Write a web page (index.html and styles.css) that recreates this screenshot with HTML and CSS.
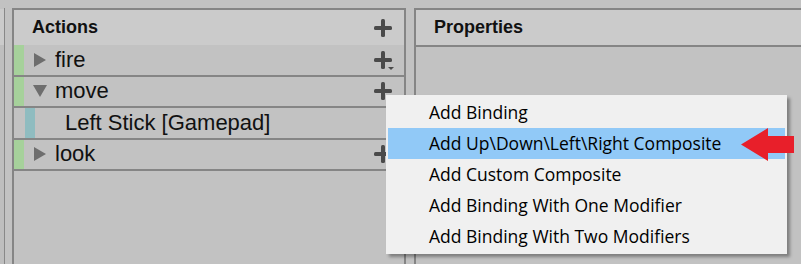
FILE: index.html
```html
<!DOCTYPE html>
<html>
<head>
<meta charset="utf-8">
<link rel="stylesheet" href="styles.css">
</head>
<body>
<div class="app">
  <div class="side"><div class="side-head"></div><div class="side-body"></div></div>
  <section class="panel actions">
    <header class="panel-head">
      <span>Actions</span>
      <svg class="plus" width="18" height="18" viewBox="0 0 18 18"><rect x="0" y="7" width="18" height="4" rx="1.5"/><rect x="7" y="0" width="4" height="18" rx="1.5"/></svg>
    </header>
    <div class="row">
      <span class="mark green"></span>
      <svg class="tri" width="14" height="14" viewBox="0 0 14 14"><polygon points="1,0 13,7 1,14"/></svg>
      <span class="label">fire</span>
      <svg class="plus" width="18" height="18" viewBox="0 0 18 18"><rect x="0" y="7" width="18" height="4" rx="1.5"/><rect x="7" y="0" width="4" height="18" rx="1.5"/><polygon points="14,16 20,16 17,19"/></svg>
    </div>
    <div class="row">
      <span class="mark green"></span>
      <svg class="tri" width="14" height="14" viewBox="0 0 14 14"><polygon points="0,1 14,1 7,13"/></svg>
      <span class="label">move</span>
      <svg class="plus" width="18" height="18" viewBox="0 0 18 18"><rect x="0" y="7" width="18" height="4" rx="1.5"/><rect x="7" y="0" width="4" height="18" rx="1.5"/></svg>
    </div>
    <div class="row binding">
      <span class="mark teal"></span>
      <span class="label">Left Stick [Gamepad]</span>
    </div>
    <div class="row">
      <span class="mark green"></span>
      <svg class="tri" width="14" height="14" viewBox="0 0 14 14"><polygon points="1,0 13,7 1,14"/></svg>
      <span class="label">look</span>
      <svg class="plus" width="18" height="18" viewBox="0 0 18 18"><rect x="0" y="7" width="18" height="4" rx="1.5"/><rect x="7" y="0" width="4" height="18" rx="1.5"/></svg>
    </div>
  </section>
  <section class="panel props">
    <header class="panel-head"><span>Properties</span></header>
  </section>
</div>
<ul class="menu">
  <li>Add Binding</li>
  <li class="active">Add Up\Down\Left\Right Composite</li>
  <li>Add Custom Composite</li>
  <li>Add Binding With One Modifier</li>
  <li>Add Binding With Two Modifiers</li>
</ul>
<svg class="arrow" width="54" height="34" viewBox="0 0 54 34"><polygon points="0,16.5 27,0 27,8 53,8 53,25 27,25 27,33"/></svg>
</body>
</html>
```

FILE: styles.css
```css
html, body {
  margin: 0;
  padding: 0;
}
body {
  width: 801px;
  height: 264px;
  overflow: hidden;
  background: #c2c2c2;
  font-family: "Liberation Sans", Arial, sans-serif;
  color: #111;
  position: relative;
}
.app {
  display: flex;
  padding-top: 8px;
  height: 256px;
}
.side {
  width: 4px;
  flex: none;
  border-right: 1px solid #888;
  margin-right: 7px;
  display: flex;
  flex-direction: column;
}
.side-head {
  margin-top: 1px;
  height: 36px;
  background: #cbcbcb;
}
.side-body {
  flex: 1;
  background: #bebebe;
}
.panel {
  border: 2px solid #858585;
  border-bottom: none;
  display: flex;
  flex-direction: column;
}
.actions {
  width: 390px;
  flex: none;
  margin-right: 8px;
}
.props {
  width: 400px;
  flex: none;
  border-right: none;
}
.panel-head {
  height: 35px;
  flex: none;
  background: #cbcbcb;
  display: flex;
  align-items: center;
  justify-content: space-between;
  font-weight: bold;
  font-size: 18px;
  padding: 0 12px 0 18px;
}
.props .panel-head {
  border-bottom: 2px solid #858585;
  padding-left: 18px;
}
.plus {
  fill: #4a4a4a;
  overflow: visible;
  flex: none;
}
.row {
  height: 29.5px;
  flex: none;
  border-bottom: 2px solid #858585;
  display: flex;
  align-items: center;
  font-size: 22px;
  padding-right: 12px;
}
.mark {
  width: 10px;
  align-self: stretch;
  flex: none;
}
.green {
  background: #a6d19b;
}
.teal {
  background: #8fbcc0;
  margin-left: 11px;
}
.tri {
  fill: #6e6e6e;
  margin-left: 9px;
  flex: none;
}
.label {
  flex: 1;
  margin-left: 8px;
}
.binding .label {
  margin-left: 30px;
}
.menu {
  position: absolute;
  left: 386px;
  top: 95px;
  width: 397px;
  margin: 0;
  padding: 2px 2px;
  list-style: none;
  background: #f0f0f0;
  box-shadow: 3px 3px 3px rgba(0, 0, 0, 0.35);
  font-family: "Open Sans", sans-serif;
  font-size: 17.5px;
  color: #000;
}
.menu li {
  height: 31px;
  line-height: 31px;
  padding-left: 41px;
}
.menu li.active {
  background: #91c9f7;
}
.arrow {
  position: absolute;
  left: 741px;
  top: 128px;
  fill: #e81f2a;
}
```
